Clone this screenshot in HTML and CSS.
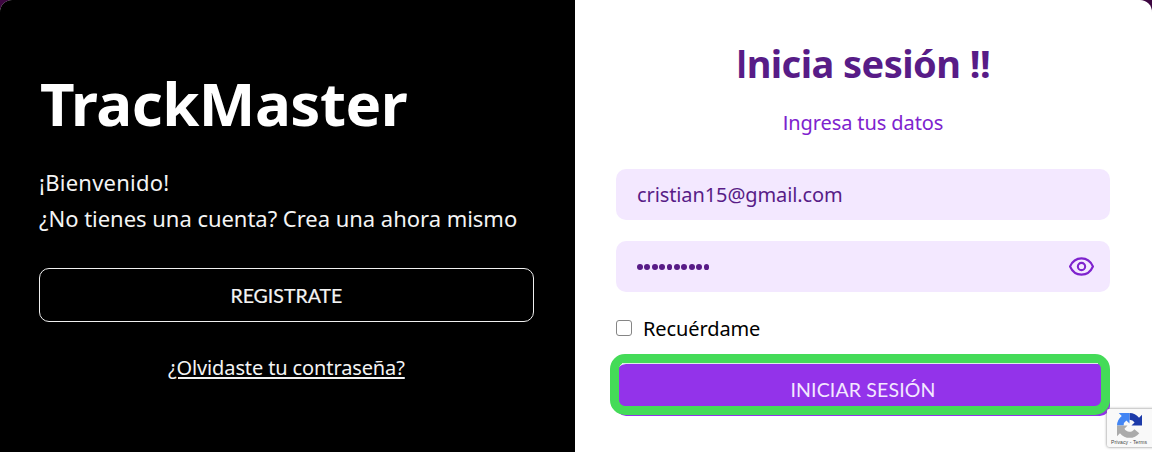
FILE: index.html
```
<!DOCTYPE html>
<html lang="es">
<head>
<meta charset="utf-8">
<title>TrackMaster</title>
<link rel="stylesheet" href="styles.css">
</head>
<body>
<main class="card">
  <section class="intro">
    <h1 class="brand">TrackMaster</h1>
    <p class="welcome"><span class="t-hello">¡Bienvenido!</span><br><span class="t-ask">¿No tienes una cuenta? Crea una ahora mismo</span></p>
    <a class="register"><span class="caps">REGISTRATE</span></a>
    <a class="forgot"><span class="t-forgot">¿Olvidaste tu contraseña?</span></a>
  </section>
  <section class="login">
    <h2 class="title"><span class="plain-i">I</span>nicia sesión !!</h2>
    <p class="subtitle"><span class="plain-i">I</span>ngresa tus datos</p>
    <div class="field email"><span class="t-email">cristian15@gmail.com</span></div>
    <div class="field password">
      <span class="dots"><i></i><i></i><i></i><i></i><i></i><i></i><i></i><i></i><i></i><i></i></span>
      <svg class="eye" viewBox="0 0 24 18" fill="none" stroke="#7e22ce" stroke-width="2"><path d="M1 9C3.200 4 7.200 1.200 12 1.200S20.800 4 23 9C20.800 14 16.800 16.800 12 16.800S3.200 14 1 9Z"/><circle cx="12" cy="9" r="3.500"/></svg>
    </div>
    <label class="remember"><span class="box"></span><span>Recuérdame</span></label>
    <div class="submit"><span class="caps">INICIAR SESIÓN</span><div class="highlight"></div></div>
  </section>
</main>
<aside class="captcha">
  <svg class="captcha-logo" viewBox="0 0 64 64">
    <path fill="#1c3aa9" d="M64 31.950V4.600l-7.600 7.600A32 32 0 0 0 32 0v17a15 15 0 0 1 13 7l-8 8Z"/>
    <path fill="#4285f4" d="M32 0H4.500l7.600 7.600A32 32 0 0 0 0 32h17a15 15 0 0 1 7-13l8 8Z"/>
    <path fill="#ababab" d="M0 32v27.500l7.600-7.600A32 32 0 0 0 57 52L44.500 41.500A15 15 0 0 1 19 40l8-8Z"/>
  </svg>
  <span class="captcha-text">Privacy - Terms</span>
</aside>
</body>
</html>
```
FILE: styles.css
```
* { box-sizing: border-box; }
body {
  margin: 0;
  height: 452px;
  overflow: hidden;
  background: #3d0641;
  font-family: "Noto Sans", "Open Sans", sans-serif;
}
h1, h2, p { margin: 0; }
span { white-space: nowrap; }
.plain-i { font-family: Lato, sans-serif; }
.caps { font-family: Lato, sans-serif; font-size: 19.500px; }
.card {
  display: flex;
  width: 1151.5px;
  height: 452px;
  border-radius: 12px 12px 0 0;
  overflow: hidden;
  background: #fff;
}
.intro {
  display: flex;
  flex-direction: column;
  width: 574.7px;
  padding: 60px 41px 0 39px;
  background: #000;
  color: #fff;
}
.brand { height: 86px; padding-left: 1px; font-size: 60px; line-height: 86px; font-weight: 700; letter-spacing: -0.500px; }
.welcome { margin-top: 18px; font-size: 22px; line-height: 36px; color: #f4f4f4; }
.t-hello { letter-spacing: 0.250px; }
.t-ask { letter-spacing: -0.030px; }
.register {
  display: flex;
  justify-content: center;
  align-items: center;
  height: 54px;
  margin-top: 32px;
  border: 1px solid #f0f0f0;
  border-radius: 10px;
  color: #f4f4f4;
}
.register .caps { -webkit-text-stroke: 0.200px #f4f4f4; }
.forgot {
  margin-top: 30px;
  text-align: center;
  font-size: 20px;
  line-height: 32px;
  letter-spacing: -0.120px;
  color: #f4f4f4;
  text-decoration: underline;
  text-decoration-thickness: 2px;
  text-underline-offset: 2px;
}
.login {
  display: flex;
  flex-direction: column;
  flex: 1;
  padding: 36px 41.500px 0 41.300px;
}
.title { height: 54px; text-align: center; font-size: 38px; line-height: 54px; font-weight: 700; letter-spacing: -0.550px; color: #581c87; }
.subtitle { height: 32px; margin-top: 16px; text-align: center; font-size: 20px; line-height: 32px; letter-spacing: -0.100px; color: #7e22ce; }
.field {
  display: flex;
  align-items: center;
  height: 51px;
  padding: 0 16px 0 21px;
  border-radius: 10px;
  background: #f3e8ff;
  color: #581c87;
  font-size: 20px;
}
.email { margin-top: 31px; letter-spacing: -0.100px; }
.password { justify-content: space-between; margin-top: 21px; }
.dots { display: flex; gap: 1.500px; }
.dots i { width: 5.900px; height: 6px; border-radius: 50%; background: #581c87; }
.eye { width: 25px; height: 19px; }
.remember {
  display: flex;
  align-items: center;
  gap: 11px;
  height: 32px;
  margin-top: 20px;
  font-size: 20px;
  letter-spacing: -0.100px;
  color: #000;
}
.box { width: 16px; height: 16px; border: 1.500px solid #858585; border-radius: 3px; }
.submit {
  position: relative;
  display: flex;
  justify-content: center;
  align-items: center;
  height: 52px;
  margin-top: 19.500px;
  border-radius: 10px;
  background: #9333ea;
  color: #f3e8ff;
}
.submit .caps { letter-spacing: 0.150px; }
.highlight {
  position: absolute;
  left: -6px;
  right: 0;
  top: -10px;
  height: 61.500px;
  border: 9.500px solid #44db58;
  border-radius: 15px;
}
.highlight::after {
  content: "";
  display: block;
  height: 1px;
  margin: 0 3px;
  background: #dfe9ea;
}
.captcha {
  position: absolute;
  left: 1107px;
  top: 409px;
  width: 50px;
  height: 38px;
  background: #f9f9f9;
  border-radius: 2px;
  box-shadow: 0 0 3px #777;
}
.captcha-logo { position: absolute; left: 10px; top: 4px; width: 25px; height: 25px; }
.captcha-text { position: absolute; left: 4px; top: 29px; font: 5px/8px "Liberation Sans", sans-serif; letter-spacing: 0.120px; color: #444; }
```
